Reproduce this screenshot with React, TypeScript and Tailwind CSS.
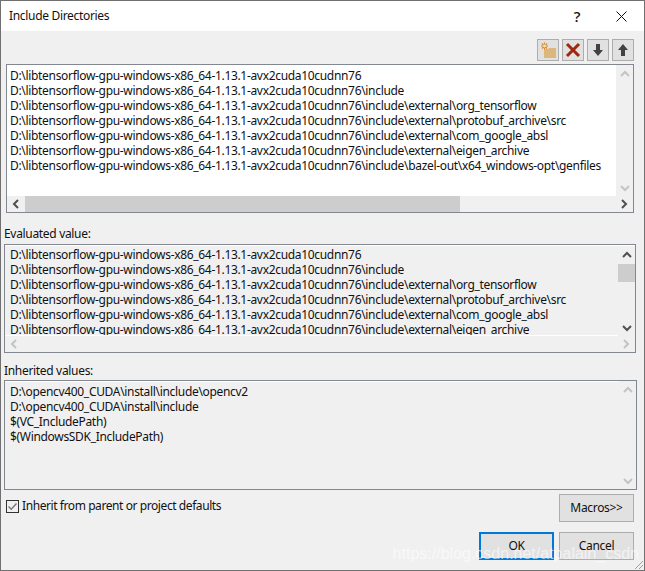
const includeDirs = [
  'D:\\libtensorflow-gpu-windows-x86_64-1.13.1-avx2cuda10cudnn76',
  'D:\\libtensorflow-gpu-windows-x86_64-1.13.1-avx2cuda10cudnn76\\include',
  'D:\\libtensorflow-gpu-windows-x86_64-1.13.1-avx2cuda10cudnn76\\include\\external\\org_tensorflow',
  'D:\\libtensorflow-gpu-windows-x86_64-1.13.1-avx2cuda10cudnn76\\include\\external\\protobuf_archive\\src',
  'D:\\libtensorflow-gpu-windows-x86_64-1.13.1-avx2cuda10cudnn76\\include\\external\\com_google_absl',
  'D:\\libtensorflow-gpu-windows-x86_64-1.13.1-avx2cuda10cudnn76\\include\\external\\eigen_archive',
  'D:\\libtensorflow-gpu-windows-x86_64-1.13.1-avx2cuda10cudnn76\\include\\bazel-out\\x64_windows-opt\\genfiles',
];

const inherited = [
  'D:\\opencv400_CUDA\\install\\include\\opencv2',
  'D:\\opencv400_CUDA\\install\\include',
  '$(VC_IncludePath)',
  '$(WindowsSDK_IncludePath)',
];

function Chevron({ dir, off }: { dir: 'up' | 'down' | 'left' | 'right'; off?: boolean }) {
  const points = {
    up: '1,7 5,3 9,7',
    down: '1,3 5,7 9,3',
    left: '7,1 3,5 7,9',
    right: '3,1 7,5 3,9',
  }[dir];
  return (
    <svg width="10" height="10" viewBox="0 0 10 10" className="shrink-0">
      <polyline points={points} fill="none" stroke={off ? '#c4c4c4' : '#505050'} strokeWidth="2" />
    </svg>
  );
}

function VBar({ off, thumb }: { off?: boolean; thumb?: boolean }) {
  return (
    <div className="w-[17px] shrink-0 flex flex-col items-center bg-[#f0f0f0]">
      <div className="h-[17px] flex items-center justify-center shrink-0">
        <Chevron dir="up" off={off} />
      </div>
      {thumb && <div className="w-full h-[18px] mt-px bg-[#cdcdcd]" />}
      <div className="flex-1" />
      <div className="h-[17px] flex items-center justify-center shrink-0">
        <Chevron dir="down" off={off} />
      </div>
    </div>
  );
}

function HBar({ off, thumb }: { off?: boolean; thumb?: boolean }) {
  return (
    <div className="h-4 flex items-center bg-[#f0f0f0] shrink-0">
      <div className="w-[18px] flex justify-center shrink-0">
        <Chevron dir="left" off={off} />
      </div>
      {thumb && <div className="w-[435px] h-full bg-[#cdcdcd]" />}
      <div className="flex-1" />
      <div className="w-[18px] flex justify-center shrink-0">
        <Chevron dir="right" off={off} />
      </div>
    </div>
  );
}

function Lines({ items }: { items: string[] }) {
  return (
    <div className="pl-[3px] pt-[1px] overflow-hidden">
      {items.map((t) => (
        <div key={t} className="h-[15px] leading-[15px] whitespace-nowrap">
          {t}
        </div>
      ))}
    </div>
  );
}

function ToolButton({ children }: { children: React.ReactNode }) {
  return (
    <div className="w-[22px] h-[22px] flex items-center justify-center bg-[#e1e1e1] border border-[#adadad]">
      {children}
    </div>
  );
}

function DialogButton({ label, primary }: { label: string; primary?: boolean }) {
  return (
    <div
      className={
        primary
          ? 'w-[75px] h-[28px] flex items-center justify-center bg-[#e1e1e1] border-2 border-[#0078d7]'
          : 'w-[75px] h-[28px] flex items-center justify-center bg-[#e1e1e1] border border-[#adadad]'
      }
    >
      {label}
    </div>
  );
}

export default function App() {
  return (
    <div className="relative w-[645px] h-[571px] flex flex-col overflow-hidden bg-[#f0f0f0] border border-[#707070] font-['Noto_Sans',sans-serif] text-[12px] text-[#111] tracking-[-0.32px]">
      {/* Title bar */}
      <div className="h-[30px] shrink-0 bg-white flex items-center pl-2">
        <span>Include Directories</span>
        <span className="ml-auto w-[20px] text-center text-[15px] font-medium">?</span>
        <svg width="11" height="11" viewBox="0 0 11 11" className="ml-[29px] mr-[17px]">
          <path d="M0.5 0.5 L10.5 10.5 M10.5 0.5 L0.5 10.5" stroke="#111" strokeWidth="1" />
        </svg>
      </div>

      {/* Toolbar */}
      <div className="flex justify-end gap-[3px] pt-2 pr-[10px] h-[33px] shrink-0">
        <ToolButton>
          <svg width="17" height="17" viewBox="0 0 17 17">
            <path d="M4 7 H8 L9 6 H16 V16 H4 Z" fill="#dcb67a" />
            <path d="M4.5 0.5 V7.5 M1 4 H8 M2 1.5 L7 6.5 M7 1.5 L2 6.5" stroke="#d9892b" strokeWidth="1.1" />
            <circle cx="4.5" cy="4" r="1.4" fill="#fbe9a8" />
          </svg>
        </ToolButton>
        <ToolButton>
          <svg width="16" height="16" viewBox="0 0 16 16">
            <path d="M2 2 L14 14 M14 2 L2 14" stroke="#a1260d" strokeWidth="3" />
          </svg>
        </ToolButton>
        <ToolButton>
          <svg width="14" height="14" viewBox="0 0 14 14">
            <path d="M5 1 H9 V7 H12 L7 13 L2 7 H5 Z" fill="#424242" />
          </svg>
        </ToolButton>
        <ToolButton>
          <svg width="14" height="14" viewBox="0 0 14 14">
            <path d="M5 13 H9 V7 H12 L7 1 L2 7 H5 Z" fill="#424242" />
          </svg>
        </ToolButton>
      </div>

      {/* Editable list */}
      <div className="ml-[5px] mr-[10px] h-[149px] shrink-0 border border-[#828790] flex flex-col bg-white">
        <div className="flex flex-1 min-h-0">
          <div className="flex-1 min-w-0 pt-[2px]">
            <Lines items={includeDirs} />
          </div>
          <VBar off />
        </div>
        <HBar thumb />
      </div>

      <div className="h-[31px] shrink-0 pl-[3px] flex items-end pb-[3px] leading-[15px]">Evaluated value:</div>

      {/* Evaluated */}
      <div className="ml-[3px] mr-[8px] h-[109px] shrink-0 border border-[#828790] flex flex-col">
        <div className="flex flex-1 min-h-0 border-t border-white">
          <div className="flex-1 min-w-0 overflow-hidden border-b border-white pl-[2px]">
            <Lines items={includeDirs.slice(0, 6)} />
          </div>
          <VBar thumb />
        </div>
        <HBar off />
      </div>

      <div className="h-[27px] shrink-0 pl-[3px] flex items-end pb-[2px] leading-[15px]">Inherited values:</div>

      {/* Inherited */}
      <div className="ml-[3px] mr-[7px] h-[110px] shrink-0 border border-[#828790] flex">
        <div className="flex-1 min-w-0 border-t border-white pl-[2px] pt-px">
          <Lines items={inherited} />
        </div>
        <VBar off />
      </div>

      {/* Footer */}
      <div className="flex pl-[5px] pr-[10px] pt-[4px] shrink-0">
        <label className="flex items-center h-[22px] gap-[3px] mt-[1px] tracking-[-0.42px]">
          <span className="w-[13px] h-[13px] border border-[#333] flex items-center justify-center">
            <svg width="11" height="11" viewBox="0 0 11 11">
              <path d="M1.5 5.5 L4.2 8.2 L9.5 2.5" fill="none" stroke="#777" strokeWidth="1.4" />
            </svg>
          </span>
          Inherit from parent or project defaults
        </label>
        <div className="ml-auto">
          <DialogButton label="Macros>>" />
        </div>
      </div>
      <div className="flex justify-end gap-[5px] pr-[10px] pt-[10px] shrink-0">
        <DialogButton label="OK" primary />
        <DialogButton label="Cancel" />
      </div>

      {/* Watermark */}
      <div className="absolute right-[5px] bottom-[6px] text-[16px] leading-5 tracking-normal text-white/60 font-['Liberation_Sans',sans-serif] pointer-events-none">
        https://blog.csdn.net/atpalain_csdn
      </div>

      {/* Resize grip */}
      <svg width="12" height="12" viewBox="0 0 12 12" className="absolute right-0 bottom-0">
        <path d="M11 3 L3 11 M11 7 L7 11" stroke="#a0a0a0" strokeWidth="1" />
      </svg>
    </div>
  );
}
